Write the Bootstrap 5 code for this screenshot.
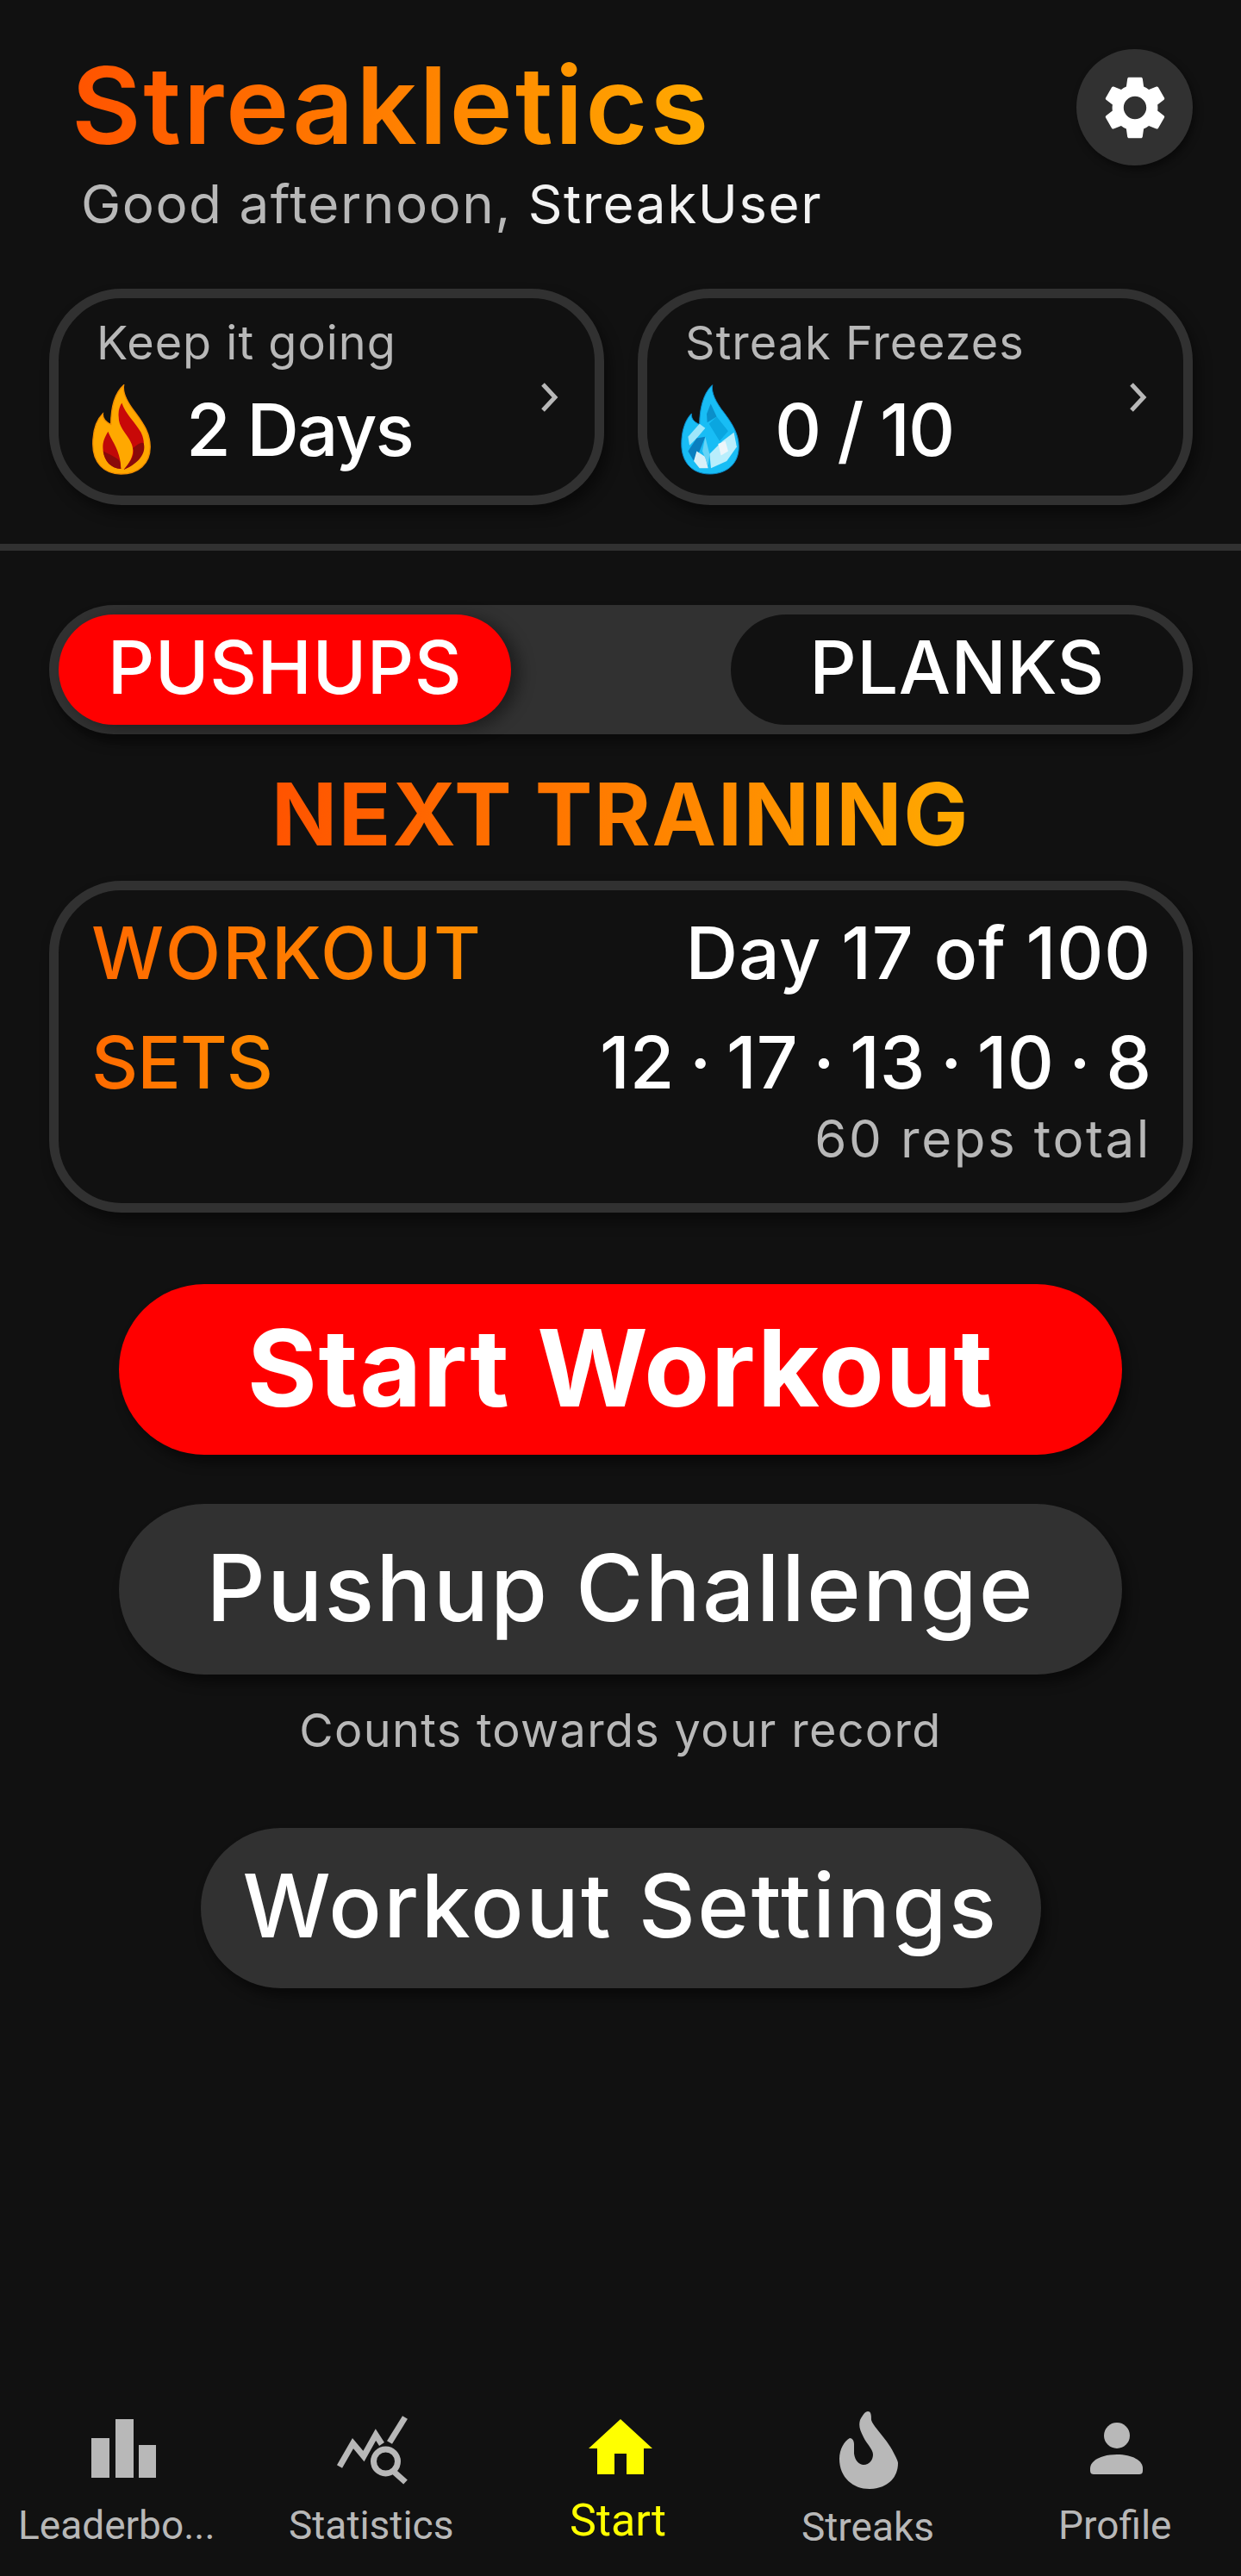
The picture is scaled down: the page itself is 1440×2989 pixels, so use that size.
<!DOCTYPE html>
<html lang="en">
<head>
  <meta charset="UTF-8">
  <title>Streakletics</title>
  <link href="https://cdn.jsdelivr.net/npm/bootstrap@5.3.3/dist/css/bootstrap.min.css" rel="stylesheet">
  <style>
    body { background: #111; color: #fff; font-family: "Inter", "Liberation Sans", sans-serif; }
    .app-screen { width: 1440px; height: 2989px; }
    .app-top { padding: 57px 56px 0 57px; height: 335px; flex-shrink: 0; }
    .app-title { font-size: 124px; font-weight: 600; line-height: 131px; letter-spacing: 2.7px; margin: 0 0 0 26px; }
    .grad-text { background: linear-gradient(100deg, #ff5200, #ffab00); -webkit-background-clip: text; background-clip: text; color: transparent; }
    .greet { font-size: 62px; line-height: 70px; letter-spacing: 1.5px; color: #b8b8b8; margin: 14px 0 0 37px; }
    .greet span { color: #f2f2f2; }
    .gear-btn { width: 135px; height: 135px; background: #313131; border-radius: 50%; box-shadow: 3px 5px 10px rgba(0,0,0,.45); }
    .gear-btn svg { width: 88px; height: 88px; }
    .stat-row { padding: 0 56px 0 57px; gap: 39px; }
    .stat-box { width: 644px; height: 251px; background: #111; border: 11px solid #313131; border-radius: 84px; box-shadow: 6px 10px 16px rgba(0,0,0,.45); color: #fff; }
    .stat-label { position: absolute; left: 44px; top: 20px; font-size: 54px; line-height: 64px; letter-spacing: 1px; color: #b8b8b8; }
    .stat-value { position: absolute; left: 39px; top: 100px; gap: 41px; font-size: 84px; line-height: 105px; font-weight: 500; letter-spacing: -2px; }
    .stat-value svg { width: 68px; height: 105px; }
    .stat-chev { position: absolute; right: 41px; top: 97px; width: 24px; height: 36px; }
    .split-line { height: 8px; background: #313131; margin: 45px 0 0; opacity: 1; border: 0; }
    .exercise-toggle { margin: 63px 56px 0 57px; height: 150px; background: #313131; border-radius: 75px; padding: 11px; box-shadow: 4px 10px 14px rgba(0,0,0,.4); }
    .exercise-toggle .btn { width: 525px; height: 128px; border-radius: 64px; border: 0; padding: 0 0 5px; font-size: 85px; font-weight: 500; color: #fff; line-height: 1; letter-spacing: .5px; }
    .pick-on { background: #f00; box-shadow: 10px 4px 18px rgba(0,0,0,.4); }
    .pick-off { background: #111; }
    .next-head { font-size: 100px; font-weight: 700; line-height: 120px; text-align: center; margin: 33px 0 0; letter-spacing: 1.7px; }
    .next-head span { display: inline-block; }
    .plan-box { margin: 17px 56px 0 57px; height: 385px; flex-shrink: 0; border: 11px solid #313131; border-radius: 84px; padding: 23px 37px 0 38px; box-shadow: 6px 10px 16px rgba(0,0,0,.45); }
    .plan-row { font-size: 84px; line-height: 100px; font-weight: 500; height: 127px; }
    .plan-row .grad-text { background: linear-gradient(90deg, #ff6a00, #ff8c00); -webkit-background-clip: text; background-clip: text; }
    .plan-word { letter-spacing: 2.2px; }
    .plan-short { letter-spacing: -1px; }
    .plan-day { letter-spacing: .7px; }
    .plan-sets { word-spacing: -5px; }
    .plan-sub { font-size: 60px; line-height: 70px; letter-spacing: 2.6px; color: #b8b8b8; text-align: right; margin-top: -24px; }
    .big-action { display: block; flex-shrink: 0; border: 0; border-radius: 99px; color: #fff; box-shadow: 6px 10px 14px rgba(0,0,0,.45); padding: 0; }
    .act-start { width: 1164px; height: 198px; margin: 83px auto 0; background: #f00; font-size: 124px; font-weight: 700; line-height: 1; letter-spacing: 1.6px; padding-bottom: 4px; }
    .act-start:hover, .act-start:active { background: #f00; color: #fff; }
    .act-challenge { width: 1164px; height: 198px; margin: 57px auto 0; background: #313131; font-size: 107px; font-weight: 500; letter-spacing: 2.1px; padding-bottom: 3px; }
    .act-note { font-size: 54px; line-height: 64px; letter-spacing: 1.3px; color: #b8b8b8; text-align: center; margin: 33px 0 0; }
    .act-settings { width: 975px; height: 186px; margin: 81px auto 0; background: #313131; font-size: 102px; font-weight: 500; letter-spacing: 2.5px; padding-bottom: 5px; }
    .tabbar { height: 229px; font-family: "Roboto", "Liberation Sans", sans-serif; font-size: 46px; font-weight: 400; color: #b8b8b8; }
    .tabbar svg { position: absolute; left: 0; top: 0; width: 1440px; height: 229px; }
    .tab-name { position: absolute; line-height: 50px; white-space: nowrap; }
    .tab-active { color: #ff0; font-size: 52px; }
  </style>
</head>
<body>
  <div class="app-screen d-flex flex-column">

    <!-- Header -->
    <div class="app-top d-flex justify-content-between align-items-start">
      <div>
        <h1 class="app-title"><span class="grad-text">Streakletics</span></h1>
        <p class="greet">Good afternoon, <span>StreakUser</span></p>
      </div>
      <button class="gear-btn btn p-0 d-flex align-items-center justify-content-center border-0">
        <svg viewBox="0 0 24 24" fill="#fff"><path d="M19.14 12.94c.04-.3.06-.61.06-.94 0-.32-.02-.64-.07-.94l2.03-1.58c.18-.14.23-.41.12-.61l-1.92-3.32c-.12-.22-.37-.29-.59-.22l-2.39.96c-.5-.38-1.03-.7-1.62-.94l-.36-2.54c-.04-.24-.24-.41-.48-.41h-3.84c-.24 0-.43.17-.47.41l-.36 2.54c-.59.24-1.13.57-1.62.94l-2.39-.96c-.22-.08-.47 0-.59.22L2.74 8.87c-.12.21-.08.47.12.61l2.03 1.58c-.05.3-.09.63-.09.94s.02.64.07.94l-2.03 1.58c-.18.14-.23.41-.12.61l1.92 3.32c.12.22.37.29.59.22l2.39-.96c.5.38 1.03.7 1.62.94l.36 2.54c.05.24.24.41.48.41h3.84c.24 0 .44-.17.47-.41l.36-2.54c.59-.24 1.13-.56 1.62-.94l2.39.96c.22.08.47 0 .59-.22l1.92-3.32c.12-.22.07-.47-.12-.61l-2.01-1.58zM12 15.6c-1.98 0-3.6-1.62-3.6-3.6s1.62-3.6 3.6-3.6 3.6 1.62 3.6 3.6-1.62 3.6-3.6 3.6z"/></svg>
      </button>
    </div>

    <!-- Streak cards -->
    <div class="stat-row d-flex">
      <div class="stat-box position-relative">
        <div class="stat-label">Keep it going</div>
        <div class="stat-value d-flex align-items-center">
          <svg viewBox="140 357 204 316">
            <path fill="#ffa800" stroke="#f08c00" stroke-width="4" d="M250 359C245 385 262 420 290 455C320 495 342 530 342 575C342 635 300 670 240 670C180 670 142 630 142 565C142 520 155 480 177 459C175 480 190 490 205 497C205 450 215 390 250 359Z"/>
            <path fill="#c80808" d="M243 422C255 460 290 490 310 525C330 565 325 620 250 655C280 620 290 590 275 560C262 530 232 510 232 470C230 450 235 435 243 422Z"/>
            <path fill="#c00808" d="M195 522C205 550 240 590 240 652C195 650 175 610 177 570C178 550 188 535 195 522Z"/>
            <path fill="#8a0a0a" d="M282 580C300 565 315 555 320 565C328 600 300 635 250 655C280 620 290 600 282 580ZM178 590C195 600 225 610 236 625L240 652C205 650 183 625 178 590Z"/>
          </svg>
          <span>2 Days</span>
        </div>
        <svg class="stat-chev" viewBox="0 0 24 36"><path d="M5 3L19 18L5 33" fill="none" stroke="#b8b8b8" stroke-width="5"/></svg>
      </div>
      <div class="stat-box position-relative">
        <div class="stat-label">Streak Freezes</div>
        <div class="stat-value d-flex align-items-center">
          <svg viewBox="140 357 204 316">
            <path fill="#18bdf5" stroke="#0a86c4" stroke-width="3" d="M250 359C245 385 262 420 290 455C320 495 342 530 342 575C342 635 300 670 240 670C180 670 142 630 142 565C142 520 155 480 177 459C175 480 190 490 205 497C205 450 215 390 250 359Z"/>
            <polygon fill="#0a8fca" points="244,425 265,470 232,490 230,460"/>
            <polygon fill="#0aa6e0" points="265,470 305,520 275,555 238,495"/>
            <polygon fill="#9fe6fa" points="165,540 205,495 225,510 195,545 170,570"/>
            <polygon fill="#0a7fc0" points="195,545 225,540 205,590 185,625 165,590"/>
            <polygon fill="#b9eefc" points="240,600 285,555 325,525 335,575 300,625 245,650"/>
            <polygon fill="#eef6fa" points="270,565 295,555 305,590 280,605"/>
            <polygon fill="#d8f0f8" points="195,590 225,610 235,650 205,650 185,625"/>
            <polygon fill="#66d4f6" points="225,540 240,600 235,640 215,590"/>
          </svg>
          <span>0 / 10</span>
        </div>
        <svg class="stat-chev" viewBox="0 0 24 36"><path d="M5 3L19 18L5 33" fill="none" stroke="#b8b8b8" stroke-width="5"/></svg>
      </div>
    </div>

    <hr class="split-line">

    <!-- Pushups / planks -->
    <div class="exercise-toggle d-flex justify-content-between">
      <button class="btn pick-on">PUSHUPS</button>
      <button class="btn pick-off">PLANKS</button>
    </div>

    <h2 class="next-head"><span class="grad-text">NEXT TRAINING</span></h2>

    <div class="plan-box">
      <div class="plan-row d-flex justify-content-between">
        <span class="grad-text plan-word">WORKOUT</span>
        <span class="plan-day">Day 17 of 100</span>
      </div>
      <div class="plan-row d-flex justify-content-between">
        <span class="grad-text plan-short">SETS</span>
        <span class="plan-sets">12 · 17 · 13 · 10 · 8</span>
      </div>
      <div class="plan-sub">60 reps total</div>
    </div>

    <!-- Actions -->
    <button class="btn big-action act-start">Start Workout</button>
    <button class="btn big-action act-challenge">Pushup Challenge</button>
    <p class="act-note">Counts towards your record</p>
    <button class="btn big-action act-settings">Workout Settings</button>

    <!-- Bottom tabs -->
    <nav class="tabbar mt-auto position-relative">
      <svg viewBox="0 2760 1440 229">
        <g fill="#b8b8b8">
          <rect x="106" y="2829" width="21" height="46"/>
          <rect x="134" y="2807" width="21" height="68"/>
          <rect x="161" y="2837" width="20" height="38"/>
        </g>
        <g fill="none" stroke="#b8b8b8" stroke-width="7">
          <path d="M394 2862L409.500 2835L422 2850L436 2825L443 2836"/>
          <path d="M470 2805L452 2834"/>
          <circle cx="447.500" cy="2856" r="14"/>
          <path d="M457 2868L470.500 2880"/>
        </g>
        <path fill="#ff0" d="M720 2807L757 2841H747V2871H727V2847H713V2871H693V2841H683Z"/>
        <path fill="#b8b8b8" d="M1007 2798C1011 2798 1011 2803 1011 2808C1013 2815 1025 2826 1033 2839C1039 2849 1042 2856 1042 2858C1042 2877 1027 2888 1009 2888C990 2888 974 2875 974 2853C974 2842 980 2832 986 2829C989 2829 991 2832 991 2836V2847C992 2855 997 2860 1002 2860C1009 2860 1013 2854 1013 2848C1013 2842 1006 2836 1002 2828C998 2820 996 2815 998 2808C1001 2802 1004 2798 1007 2798Z"/>
        <ellipse fill="#b8b8b8" cx="1296" cy="2826" rx="15" ry="15"/>
        <path fill="#b8b8b8" d="M1265 2864C1265 2855 1278 2848 1296 2848C1314 2848 1326 2855 1326 2864V2867C1326 2870 1324 2871 1322 2871H1269C1267 2871 1265 2870 1265 2867Z"/>
      </svg>
      <span class="tab-name" style="left:21px;top:145px">Leaderbo...</span>
      <span class="tab-name" style="left:335px;top:145px">Statistics</span>
      <span class="tab-name tab-active" style="left:661px;top:140px">Start</span>
      <span class="tab-name" style="left:930px;top:147px">Streaks</span>
      <span class="tab-name" style="left:1228px;top:145px">Profile</span>
    </nav>
  </div>
  <script src="https://cdn.jsdelivr.net/npm/bootstrap@5.3.3/dist/js/bootstrap.bundle.min.js"></script>
</body>
</html>
